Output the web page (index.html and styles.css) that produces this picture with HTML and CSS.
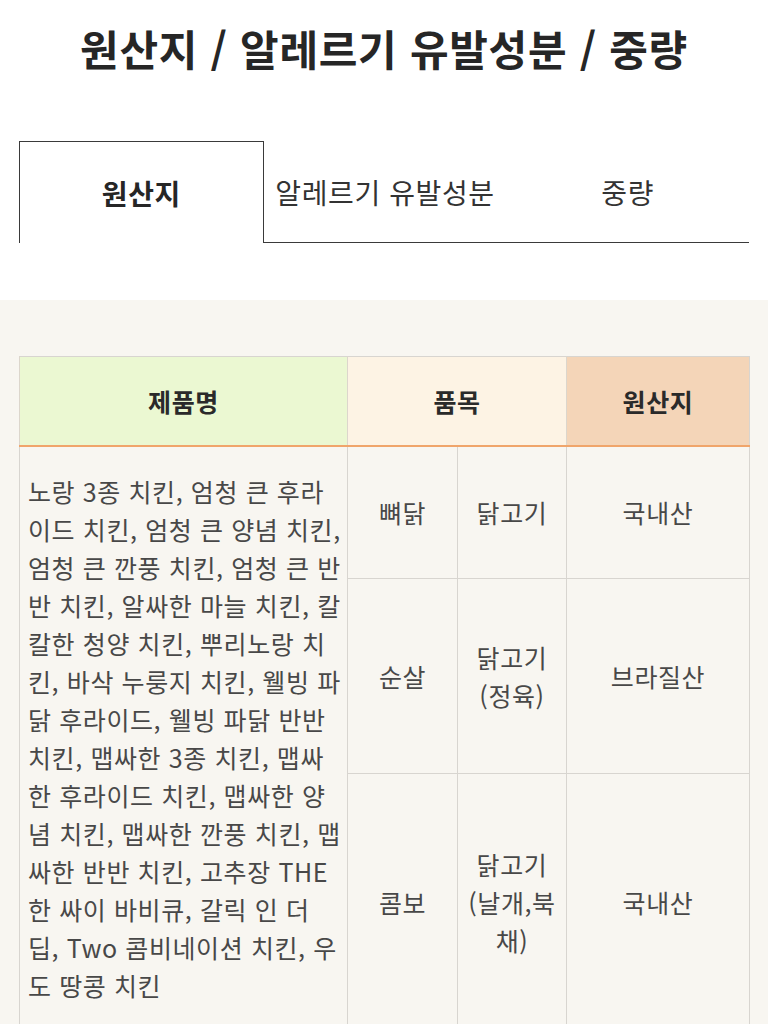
FILE: index.html
```html
<!DOCTYPE html>
<html lang="ko">
<head>
<meta charset="utf-8">
<title>원산지 / 알레르기 유발성분 / 중량</title>
<link rel="stylesheet" href="styles.css">
</head>
<body>
<main class="page">
  <section class="intro">
    <h1 class="title">원산지 / 알레르기 유발성분 / 중량</h1>
    <ul class="tabs">
      <li class="tab tab--active">원산지</li>
      <li class="tab">알레르기 유발성분</li>
      <li class="tab">중량</li>
    </ul>
  </section>
  <section class="panel">
    <table class="origin">
      <colgroup>
        <col class="c-name"><col class="c-part"><col class="c-item"><col class="c-origin">
      </colgroup>
      <thead>
        <tr>
          <th class="h-name">제품명</th>
          <th class="h-item" colspan="2">품목</th>
          <th class="h-origin">원산지</th>
        </tr>
      </thead>
      <tbody>
        <tr class="r1">
          <td class="name" rowspan="3">노랑 3종 치킨, 엄청 큰 후라<br>이드 치킨, 엄청 큰 양념 치킨,<br>엄청 큰 깐풍 치킨, 엄청 큰 반<br>반 치킨, 알싸한 마늘 치킨, 칼<br>칼한 청양 치킨, 뿌리노랑 치<br>킨, 바삭 누룽지 치킨, 웰빙 파<br>닭 후라이드, 웰빙 파닭 반반<br>치킨, 맵싸한 3종 치킨, 맵싸<br>한 후라이드 치킨, 맵싸한 양<br>념 치킨, 맵싸한 깐풍 치킨, 맵<br>싸한 반반 치킨, 고추장 THE<br>한 싸이 바비큐, 갈릭 인 더<br>딥, Two 콤비네이션 치킨, 우<br>도 땅콩 치킨</td>
          <td>뼈닭</td>
          <td>닭고기</td>
          <td>국내산</td>
        </tr>
        <tr class="r2">
          <td>순살</td>
          <td>닭고기<br>(정육)</td>
          <td>브라질산</td>
        </tr>
        <tr class="r3">
          <td>콤보</td>
          <td>닭고기<br>(날개,북<br>채)</td>
          <td>국내산</td>
        </tr>
      </tbody>
    </table>
  </section>
</main>
</body>
</html>
```

FILE: styles.css
```css
* { box-sizing: border-box; }

html, body {
  margin: 0;
  padding: 0;
  background: #f8f6f1;
}

body {
  font-family: "Noto Sans CJK KR", "Noto Sans", sans-serif;
  color: #333;
}

.page {
  width: 768px;
}

.intro {
  background: #ffffff;
  padding: 20px 19px 57px;
}

.title {
  margin: 0;
  font-size: 42px;
  line-height: 56px;
  font-weight: 700;
  text-align: center;
  color: #262626;
  letter-spacing: 0.7px;
}

.tabs {
  list-style: none;
  margin: 65px 0 0;
  padding: 0;
  display: flex;
}

.tab {
  flex: 1;
  height: 102px;
  display: flex;
  align-items: center;
  justify-content: center;
  font-size: 28px;
  letter-spacing: 0.6px;
  color: #333;
  border-bottom: 1px solid #3a3a3a;
}

.tab--active {
  font-weight: 700;
  color: #262626;
  border: 1px solid #3a3a3a;
  border-bottom: none;
}

.panel {
  padding: 56px 19px 0;
}

.origin {
  width: 730px;
  table-layout: fixed;
  border-collapse: collapse;
  border: 1px solid #d8d5d0;
  font-size: 25px;
  letter-spacing: 0.6px;
}

.c-name { width: 328px; }
.c-part { width: 110px; }
.c-item { width: 109px; }
.c-origin { width: 183px; }

.origin th {
  height: 89px;
  font-weight: 700;
  color: #2a2a2a;
  text-align: center;
  border-left: 1px solid #dcd6cc;
  border-bottom: 2px solid #f0a56b;
  padding: 0;
}

.h-name { background: #ebf8d2; }
.h-item { background: #fdf3e4; }
.h-origin { background: #f4d5b8; }

.origin td {
  border: 1px solid #d8d5d0;
  text-align: center;
  vertical-align: middle;
  line-height: 38px;
  color: #484848;
  padding: 0 4px;
}

.origin td.name {
  text-align: left;
  white-space: nowrap;
  padding: 0 8px;
}

.r1 { height: 133px; }
.r2 { height: 195px; }
.r3 { height: 256px; }
```
